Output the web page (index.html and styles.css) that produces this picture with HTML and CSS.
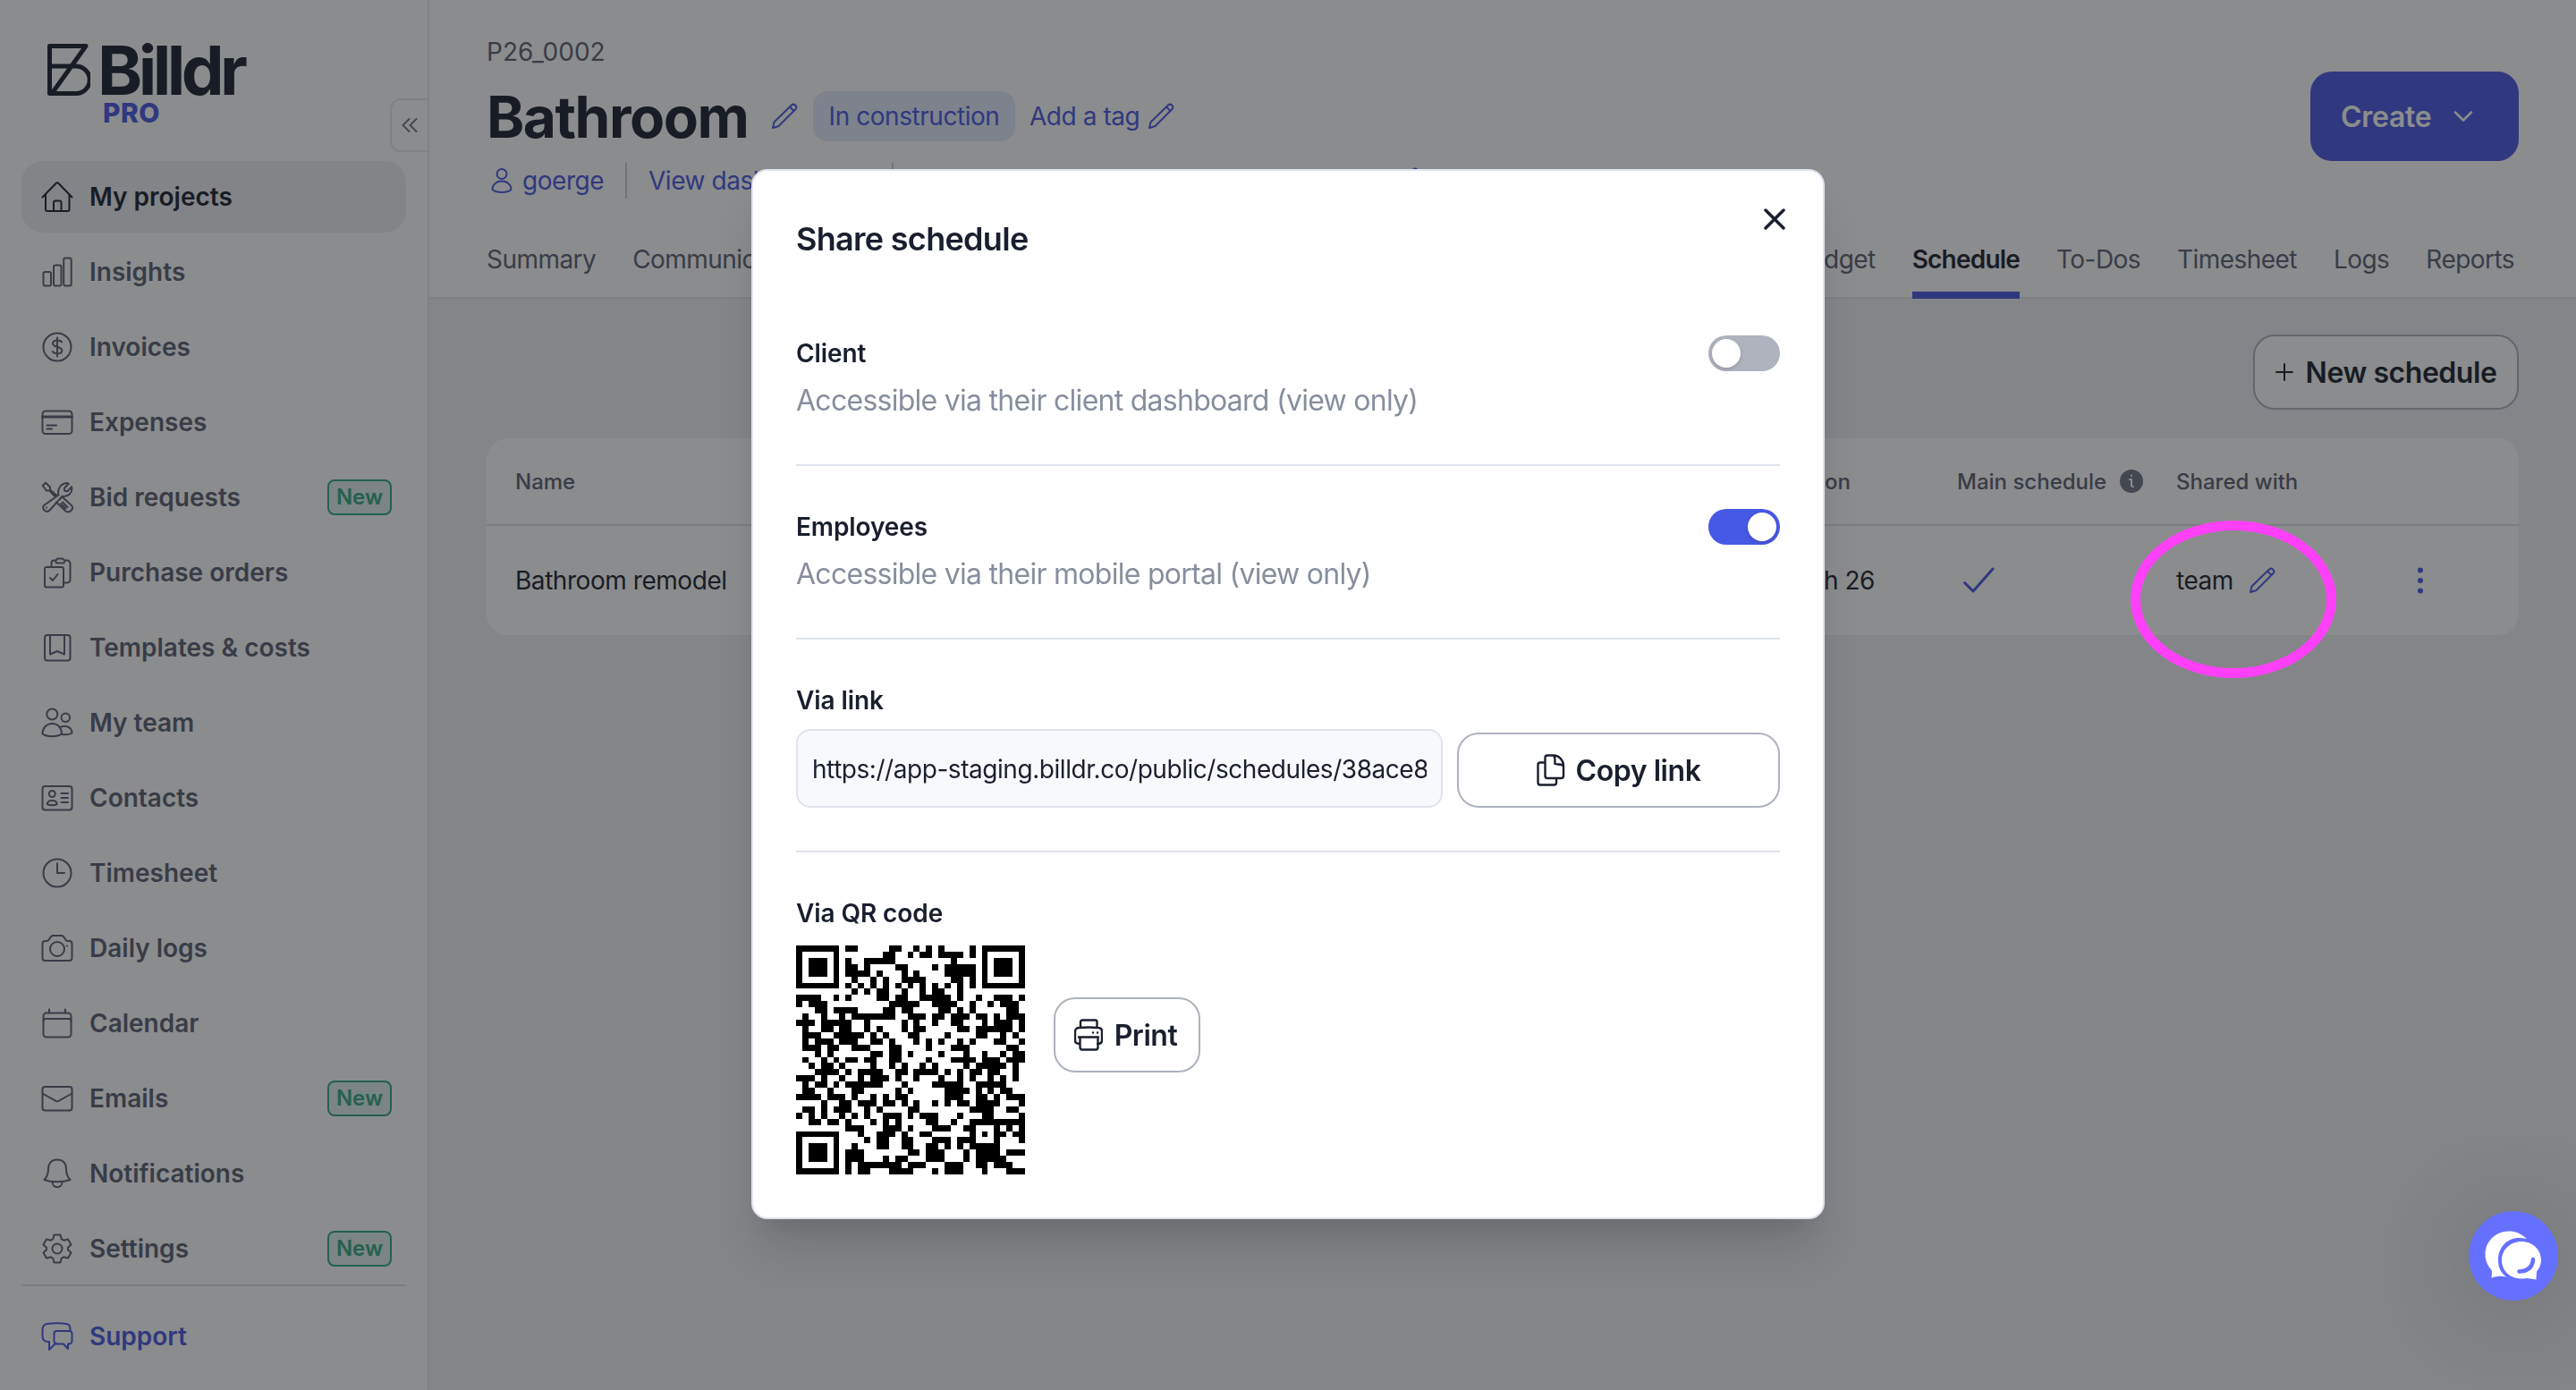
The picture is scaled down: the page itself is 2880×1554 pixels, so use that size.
FILE: index.html
```html
<!DOCTYPE html>
<html lang="en">
<head>
    <meta charset="UTF-8">
    <meta name="viewport" content="width=device-width, initial-scale=1.0">
    <title>Bathroom - Schedule</title>
    <link rel="stylesheet" href="styles.css">
</head>
<body>
    <div class="app">
        <aside class="sidebar">
            <div class="logo">
                <svg class="logo-mark" viewBox="0 0 48 58"><path d="M2.5 2.5H43L5 55.500M2.500 2.500V55.500H32a15 15 0 0 0 0-30.500H2.500" /></svg>
                <div class="logo-text">
                    <span class="logo-name">Billdr</span>
                    <span class="logo-pro">PRO</span>
                </div>
            </div>
            <button class="collapse">
                <svg viewBox="0 0 18 16"><path d="M8.500 1L1.500 8l7 7M16.500 1l-7 7 7 7" /></svg>
            </button>
            <nav class="nav">
                <a class="nav-item active">
                    <svg class="icon" viewBox="0 0 36 36"><path d="M1.500 18.500L16.500 3a2 2 0 0 1 3 0L34.500 18.500M5 15.500V32a2 2 0 0 0 2 2H29.500a2 2 0 0 0 2-2V15.500M14 34V24.500a2 2 0 0 1 2-2h4.500a2 2 0 0 1 2 2V34" /></svg>
                    <span>My projects</span>
                </a>
                <a class="nav-item">
                    <svg class="icon" viewBox="0 0 36 36"><rect x="2.500" y="18" width="8.500" height="15.500" rx="2" /><rect x="14" y="10.500" width="8.500" height="23" rx="2" /><rect x="25.200" y="2.500" width="8.500" height="31" rx="2" /></svg>
                    <span>Insights</span>
                </a>
                <a class="nav-item">
                    <svg class="icon" viewBox="0 0 36 36"><circle cx="18" cy="18" r="15.500" /><path d="M23 12.500c-1-1.500-3-2-5-2-3 0-5 1.300-5 3.600 0 5 10.300 2.800 10.300 7.600 0 2.300-2.300 3.600-5.300 3.600-2.300 0-4.300-.7-5.300-2.300M18 7.500v21" /></svg>
                    <span>Invoices</span>
                </a>
                <a class="nav-item">
                    <svg class="icon" viewBox="0 0 36 36"><rect x="1.500" y="5.500" width="33" height="25.500" rx="3.500" /><path d="M6.500 21.500h10.500M6.500 25.500h5.500" /><path class="thick" d="M1.500 12h33" /></svg>
                    <span>Expenses</span>
                </a>
                <a class="nav-item">
                    <svg class="icon" viewBox="0 0 36 36"><path d="M17 15.500L10 9.500V6.500L5 1.800 1.800 5l4 5.500h3.500l6.200 6.500M19.500 15.500c-1.500-4 .5-13 9.500-13.500l1.800.8-5 5 .5 3 3 .5 4.700-5c1.500 7-4 11.500-10.500 10.500L9.500 32.500c-3 3.500-9.500-1-6.500-5.500zM6 29.500h.1M20.500 20.500l3-3 10.500 9.500c3 4-2 9-6.500 6.500L17 23.500M24 23.500l5.500 5.500M22 25l5.500 5.500" /></svg>
                    <span>Bid requests</span>
                    <em class="badge">New</em>
                </a>
                <a class="nav-item">
                    <svg class="icon" viewBox="0 0 36 36"><rect x="4" y="12" width="21" height="22.500" rx="2" /><path d="M11.500 12V7.500a3 3 0 0 1 3-3h2M26.500 4.500H29a3.500 3.500 0 0 1 3.500 3.500v18a3.500 3.500 0 0 1-3.500 3.500h-4M10 24l3 3 5.500-7M18.500 2.500h5.500l2.500 2.500-1 2.500h-8.500l-1-2.500z" /></svg>
                    <span>Purchase orders</span>
                </a>
                <a class="nav-item">
                    <svg class="icon" viewBox="0 0 36 36"><rect x="4" y="4" width="28.500" height="28.500" rx="3" /><path d="M10 4v21.500l8-3.500 8 3.500V4" /></svg>
                    <span>Templates &amp; costs</span>
                </a>
                <a class="nav-item">
                    <svg class="icon" viewBox="0 0 36 36"><circle cx="12.300" cy="8.500" r="6" /><circle cx="27.300" cy="12.300" r="4.800" /><path d="M1.500 30.500c0-6 4-11.500 11-11.500s10.500 5.500 10.500 11.500c-4.500 3.500-17 3.500-21.500 0zM20.500 23.500c5-3.500 13.500-2 14 6-2.500 1.500-7 2-11.500 1.500" /></svg>
                    <span>My team</span>
                </a>
                <a class="nav-item">
                    <svg class="icon" viewBox="0 0 36 36"><rect x="1.500" y="5" width="33" height="26.500" rx="3" /><circle cx="12.300" cy="13.500" r="3.500" /><path d="M6.800 25c0-5.500 11-5.500 11 0-3 1.500-8 1.500-11 0zM22.500 13h7.500M22.500 18h7.500M22.500 23h7.500" /></svg>
                    <span>Contacts</span>
                </a>
                <a class="nav-item">
                    <svg class="icon" viewBox="0 0 36 36"><circle cx="18" cy="18" r="15.500" /><path d="M18 7v11h8" /></svg>
                    <span>Timesheet</span>
                </a>
                <a class="nav-item">
                    <svg class="icon" viewBox="0 0 36 36"><path d="M4.500 32h27a3 3 0 0 0 3-3V13a3 3 0 0 0-3-3h-2.500c-2 0-3-6-6-6H13c-3 0-4 6-6 6H4.500a3 3 0 0 0-3 3v16a3 3 0 0 0 3 3zM29 15.500h.1" /><circle cx="18" cy="19" r="8" /></svg>
                    <span>Daily logs</span>
                </a>
                <a class="nav-item">
                    <svg class="icon" viewBox="0 0 36 36"><rect x="2.500" y="6.500" width="31" height="27" rx="3.500" /><path d="M2.500 15.500c0-1.500 1-2.500 2.500-2.500h26c1.500 0 2.500 1 2.500 2.500M9 2.500v4M27 2.500v4" /></svg>
                    <span>Calendar</span>
                </a>
                <a class="nav-item">
                    <svg class="icon" viewBox="0 0 36 36"><rect x="1.500" y="5" width="33" height="26.500" rx="3" /><path d="M1.500 12.500L17 21.200q1 .5 2 0L34.500 12.500" /></svg>
                    <span>Emails</span>
                    <em class="badge">New</em>
                </a>
                <a class="nav-item">
                    <svg class="icon" viewBox="0 0 36 36"><path d="M18 2.500c-6.500 0-10 4.500-10 10.500 0 6.500-2 9.500-4.500 12 8 3 21 3 29 0-2.500-2.500-4.500-5.500-4.500-12 0-6-3.500-10.500-10-10.500zM12.500 27.500c0 7.500 11 7.500 11 0" /></svg>
                    <span>Notifications</span>
                </a>
                <a class="nav-item">
                    <svg class="icon" viewBox="0 0 36 36"><path d="M14.500 2.500h7l1.200 4.700 2.600 1.500 4.700-1.300 3.500 6.100-3.500 3.300v2.400l3.500 3.300-3.500 6.100-4.700-1.300-2.600 1.500-1.200 4.700h-7l-1.200-4.700-2.600-1.500L6 28.600l-3.500-6.100L6 19.200v-2.400l-3.500-3.300L6 7.400l4.700 1.300 2.600-1.500z" /><circle cx="18" cy="18" r="5.500" /></svg>
                    <span>Settings</span>
                    <em class="badge">New</em>
                </a>
            </nav>
            <a class="nav-item support">
                <svg class="icon" viewBox="0 0 36 36"><path d="M32.500 11.500V9.500c0-3-1.500-5-4.500-5.500-6-.9-14-.9-21 0-4 .5-5.500 3-5.500 7v6.500c0 4 2 6.500 6.500 6.500h1v9l7.500-7.500M17.500 12h14a3 3 0 0 1 3 3v8a3.500 3.500 0 0 1-3.500 3.500H30V32l-5-5.500h-7.500a3 3 0 0 1-3-3V15a3 3 0 0 1 3-3z" /></svg>
                <span>Support</span>
            </a>
        </aside>

        <main class="main">
            <header class="header">
                <div class="header-top">
                    <div class="project">
                        <div class="project-code">P26_0002</div>
                        <div class="project-title">
                            <h1>Bathroom</h1>
                            <svg class="pencil" viewBox="0 0 30 30"><path d="M2 28l1.500-6.500L23 2.500c3-2.500 7 1.500 4.500 4.500L8.500 26zM21 4.500l4.500 4.500" /></svg>
                            <span class="status">In construction</span>
                            <span class="add-tag">Add a tag</span>
                            <svg class="pencil" viewBox="0 0 30 30"><path d="M2 28l1.500-6.500L23 2.500c3-2.500 7 1.500 4.500 4.500L8.500 26zM21 4.500l4.500 4.500" /></svg>
                        </div>
                        <div class="project-links">
                            <span class="link-item">
                                <svg class="user" viewBox="0 0 24 30"><circle cx="12" cy="7.500" r="5.500" /><path d="M1.500 25c0-5 4-9.500 10.500-9.500S22.500 20 22.500 25c-5 4-16 4-21 0z" /></svg>
                                goerge
                            </span>
                            <span class="link-item">View dashboard</span>
                            <span class="link-item">
                                <svg class="pencil" viewBox="0 0 30 30"><path d="M2 28l1.500-6.500L23 2.500c3-2.500 7 1.500 4.500 4.500L8.500 26zM21 4.500l4.500 4.500" /></svg>
                            </span>
                        </div>
                    </div>
                    <button class="create">
                        Create
                        <svg viewBox="0 0 22 14"><path d="M2 2.500l9 9 9-9" /></svg>
                    </button>
                </div>
                <nav class="tabs">
                    <a>Summary</a>
                    <a>Communication</a>
                    <a class="push">Budget</a>
                    <a class="current">Schedule</a>
                    <a>To-Dos</a>
                    <a>Timesheet</a>
                    <a>Logs</a>
                    <a>Reports</a>
                </nav>
            </header>

            <section class="content">
                <div class="toolbar">
                    <button class="outline">
                        <svg class="plus" viewBox="0 0 20 20"><path d="M10 1v18M1 10h18" /></svg>
                        New schedule
                    </button>
                </div>
                <div class="table">
                    <div class="row head">
                        <span>Name</span>
                        <span class="right">Duration</span>
                        <span class="with-icon">
                            Main schedule
                            <svg class="info" viewBox="0 0 26 26"><circle cx="13" cy="13" r="13" /><path d="M11 11h2v6.500q0 1.500 2 1.500" /><path d="M13 6.500v.4" /></svg>
                        </span>
                        <span>Shared with</span>
                        <span></span>
                    </div>
                    <div class="row">
                        <span>Bathroom remodel</span>
                        <span class="right date">March 26</span>
                        <span><svg class="check" viewBox="0 0 36 30"><path d="M2.500 17.500l9.500 9.500L34 2" /></svg></span>
                        <span class="with-icon">
                            team
                            <svg class="pencil" viewBox="0 0 30 30"><path d="M2 28l1.500-6.500L23 2.500c3-2.500 7 1.500 4.500 4.500L8.500 26zM21 4.500l4.500 4.500" /></svg>
                        </span>
                        <span><svg class="kebab" viewBox="0 0 6 30"><circle cx="3" cy="3.500" r="3" /><circle cx="3" cy="15" r="3" /><circle cx="3" cy="26.500" r="3" /></svg></span>
                    </div>
                </div>
            </section>
        </main>
    </div>

    <div class="overlay">
        <div class="modal">
            <div class="modal-header">
                <h2>Share schedule</h2>
                <button class="close"><svg viewBox="0 0 24 24"><path d="M2 2l20 20M22 2L2 22" /></svg></button>
            </div>
            <div class="share">
                <div class="share-row">
                    <h3>Client</h3>
                    <span class="toggle"></span>
                </div>
                <p>Accessible via their client dashboard (view only)</p>
            </div>
            <div class="share">
                <div class="share-row">
                    <h3>Employees</h3>
                    <span class="toggle on"></span>
                </div>
                <p>Accessible via their mobile portal (view only)</p>
            </div>
            <div class="share via-link">
                <h3>Via link</h3>
                <div class="link-row">
                    <div class="link-field"><span id="share-link">https://app-staging.billdr.co/public/schedules/38ace8d1-5a7e-4c02-9b6f-e41d7a3058c9</span></div>
                    <button class="outline copy">
                        <svg class="copy-icon" viewBox="0 0 32 36"><path d="M9.500 4a2.500 2.500 0 0 1 2.500-2.500H19c6 0 11 5.500 11 12V24.500a2.500 2.500 0 0 1-2.500 2.500H12a2.500 2.500 0 0 1-2.500-2.500zM18.500 1.500c3 1.500 1.500 7 2 9.500 2.500 1 7.500-.5 9.500 2.500M9.500 9.500H4a2.500 2.500 0 0 0-2.500 2.500V32a2.500 2.500 0 0 0 2.500 2.500h15.500a2.500 2.500 0 0 0 2.500-2.500V27" /></svg>
                        Copy link
                    </button>
                </div>
            </div>
            <div class="share via-qr">
                <h3>Via QR code</h3>
                <div class="qr-row">
                    <svg class="qr" viewBox="0 0 37 37" shape-rendering="crispEdges"><path id="qr-path" d="" /></svg>
                    <button class="outline print">
                        <svg class="print-icon" viewBox="0 0 32 36"><path d="M7 10V3.500a2 2 0 0 1 2-2H23.500a2 2 0 0 1 2 2V10M6 28c-3 0-5-1-5-4V14.500c0-3 2-4.500 4.500-4.500q10.500-1 21 0c3 0 4.500 2 4.500 4.500V24c0 3-2 4-5 4M5 20.500h22M6.500 20.500V32a2.500 2.500 0 0 0 2.500 2.500H24a2.500 2.500 0 0 0 2.500-2.500V20.500M21 15.500h.1M26 15.500h.1" /></svg>
                        Print
                    </button>
                </div>
            </div>
        </div>
    </div>

    <svg class="highlight" viewBox="0 0 230 176"><ellipse cx="115" cy="88" rx="109.500" ry="82.500" /></svg>
    <button class="chat">
        <svg viewBox="0 0 64 56">
            <path class="bubble" d="M47 9C41 3 34 .5 27 .5 12 .5.500 12 .5 26.500c0 7 3 13 7.500 18l-.5 8q8-3 16.500-1C17 46 15 40 15 32 15 18 26 7.500 39 8q4 0 8 1z" />
            <path class="bubble" d="M41 12C28.500 12 19 21 19 33s9.500 20.500 22 20.500q3 0 6-.5l10.500 1.500.5-9c3.500-4 5-8 5-12.500C63 21 53.500 12 41 12z" />
            <path class="smile" d="M38.500 45.500Q53 45 54 32" />
        </svg>
    </button>
    <script src="script.js"></script>
</body>
</html>
```
FILE: styles.css
```css
* {
    box-sizing: border-box;
}

body {
    font-family: Inter, "Liberation Sans", sans-serif;
    font-size: 28px;
    letter-spacing: -0.45px;
    margin: 0;
    color: #191f2e;
    overflow: hidden;
}

h1, h2, h3, p {
    margin: 0;
}

button {
    font-family: inherit;
    border: none;
    padding: 0;
}

svg {
    display: block;
    flex: none;
    fill: none;
    stroke: currentColor;
    stroke-width: 2;
    stroke-linecap: round;
    stroke-linejoin: round;
}

.app {
    display: flex;
    height: 1554px;
}

/* Sidebar */
.sidebar {
    position: relative;
    width: 480px;
    flex: none;
    padding: 48px 24px 0;
    border-right: 2px solid #e8e9ec;
    background: #fff;
    letter-spacing: 0;
}

.logo {
    display: flex;
    gap: 12px;
    height: 132px;
    padding-left: 29px;
}

.logo-mark {
    width: 48px;
    height: 58px;
    margin-top: 1px;
    stroke-width: 5;
}

.logo-text {
    display: flex;
    flex-direction: column;
}

.logo-name {
    font-size: 76px;
    font-weight: 700;
    line-height: 60px;
    letter-spacing: -4.6px;
    margin-left: -4px;
}

.logo-pro {
    font-size: 30px;
    font-weight: 800;
    line-height: 36px;
    letter-spacing: 0.4px;
    margin-left: 2px;
    color: #4857e3;
}

.collapse {
    position: absolute;
    top: 110px;
    right: 0;
    width: 42px;
    height: 60px;
    display: flex;
    align-items: center;
    justify-content: center;
    border: 2px solid #e8e9ec;
    border-right: none;
    border-radius: 12px 0 0 12px;
    background: #fff;
    color: #6f7585;
}

.collapse svg {
    width: 18px;
    height: 16px;
}

.nav {
    display: flex;
    flex-direction: column;
    gap: 4px;
    border-bottom: 2px solid #dfe0ee;
    margin-bottom: 16px;
}

.nav-item {
    display: flex;
    align-items: center;
    gap: 18px;
    height: 80px;
    padding: 0 16px 0 22px;
    border-radius: 24px;
    font-weight: 600;
    color: #595f72;
}

.nav-item.active {
    background: #eeeef3;
    color: #191f2e;
}

.nav-item.support {
    color: #4857e3;
}

.icon {
    width: 36px;
    height: 36px;
}

.icon .thick {
    stroke-width: 3;
}

.badge {
    margin-left: auto;
    width: 72px;
    height: 40px;
    border: 2px solid #33a780;
    border-radius: 8px;
    background: #ddf1ec;
    color: #33a780;
    font-size: 24px;
    font-style: normal;
    line-height: 36px;
    text-align: center;
}

/* Project header */
.main {
    flex: 1;
    background: #f0f1f6;
}

.header {
    height: 334px;
    padding: 0 64px;
    border-bottom: 2px solid #e6e7eb;
    background: #fff;
}

.header-top {
    display: flex;
    justify-content: space-between;
    height: 246px;
}

.project-code {
    margin-top: 40px;
    line-height: 36px;
    letter-spacing: 0;
    color: #595f72;
}

.project-title {
    display: flex;
    align-items: center;
    height: 80px;
    margin-top: 14px;
    color: #4857e3;
}

.project-title h1 {
    font-size: 64px;
    font-weight: 700;
    letter-spacing: -1.5px;
    color: #191f2e;
    width: 318px;
}

.pencil {
    width: 30px;
    height: 30px;
    color: #4857e3;
}

.status {
    width: 226px;
    height: 56px;
    margin: 0 16px 0 17px;
    border-radius: 16px;
    background: #e3eafd;
    line-height: 56px;
    text-align: center;
}

.add-tag {
    width: 132px;
    white-space: nowrap;
}

.project-links {
    display: flex;
    margin-top: 12px;
    color: #4857e3;
}

.link-item {
    display: flex;
    align-items: center;
    gap: 11px;
    height: 40px;
    padding: 0 24px;
    border-right: 2px solid #c7cbd6;
    white-space: nowrap;
}

.link-item:first-child {
    width: 157px;
    padding: 0 0 0 5px;
}

.link-item:nth-child(2) {
    width: 298px;
}

.link-item:last-child {
    width: 588px;
    padding-right: 0;
    justify-content: flex-end;
    border: none;
}

.user {
    width: 24px;
    height: 30px;
}

.create {
    display: flex;
    align-items: center;
    gap: 25px;
    width: 233px;
    height: 100px;
    margin-top: 80px;
    padding-left: 34px;
    border-radius: 24px;
    background: #4857e3;
    color: #fff;
    font-size: 32px;
    font-weight: 600;
    letter-spacing: -0.3px;
}

.create svg {
    width: 22px;
    height: 14px;
    stroke-width: 2.5;
}

.tabs {
    display: flex;
    gap: 41px;
    height: 88px;
    padding-right: 5px;
    line-height: 88px;
    letter-spacing: -0.55px;
    color: #595f72;
}

.tabs .push {
    margin-left: auto;
}

.tabs .current {
    border-bottom: 8px solid #4857e3;
    color: #191f2e;
    font-weight: 600;
    letter-spacing: -0.8px;
}

/* Schedules table */
.content {
    padding: 40px 64px;
}

.toolbar {
    display: flex;
    justify-content: flex-end;
    margin-bottom: 32px;
}

.outline {
    display: flex;
    align-items: center;
    justify-content: center;
    height: 84px;
    border: 2px solid #adb2bf;
    border-radius: 24px;
    background: #fff;
    color: #191f2e;
    font-size: 32px;
    font-weight: 600;
    letter-spacing: -0.45px;
    white-space: nowrap;
}

.toolbar .outline {
    width: 297px;
    gap: 14px;
}

.plus {
    width: 20px;
    height: 20px;
}

.table {
    height: 220px;
    border-radius: 24px;
    background: #fff;
}

.row {
    display: grid;
    grid-template-columns: 1000px 612px 245px 269px 1fr;
    align-items: center;
    height: 122px;
    padding: 0 32px;
}

.row.head {
    height: 98px;
    border-bottom: 2px solid #dfe0ea;
    font-size: 24px;
    font-weight: 500;
    letter-spacing: 0;
    color: #595f72;
}

.right {
    text-align: right;
    padding-right: 119px;
}

.right.date {
    padding-right: 92px;
}

.with-icon {
    display: flex;
    align-items: center;
    gap: 17px;
    white-space: nowrap;
}

.head .with-icon {
    gap: 15px;
}

.info {
    width: 26px;
    height: 26px;
    color: #fff;
}

.info circle {
    fill: #6f7585;
    stroke: none;
}

.check {
    width: 36px;
    height: 30px;
    margin-left: 6px;
    color: #4857e3;
    stroke-width: 3;
}

.kebab {
    width: 6px;
    height: 30px;
    margin-left: 1px;
    color: #4857e3;
    fill: currentColor;
    stroke: none;
}

/* Share modal */
.overlay {
    position: fixed;
    inset: 0;
    display: flex;
    justify-content: center;
    align-items: flex-start;
    padding-top: 189px;
    background: rgba(23, 25, 28, 0.5);
}

.modal {
    width: 1200px;
    height: 1174px;
    padding: 0 48px;
    border: 2px solid #dfe3ee;
    border-radius: 18px;
    background: #fff;
    box-shadow: 0 40px 50px -10px rgba(0, 0, 0, 0.14), 0 20px 20px -10px rgba(0, 0, 0, 0.06);
}

.modal-header {
    display: flex;
    justify-content: space-between;
    height: 136px;
}

.modal-header h2 {
    margin-top: 52px;
    font-size: 36px;
    font-weight: 600;
    line-height: 48px;
    letter-spacing: -0.7px;
}

.close {
    width: 24px;
    height: 24px;
    margin: 42px -6px 0 0;
    background: none;
    color: #191f2e;
}

.close svg {
    stroke-width: 3.5;
}

.share {
    padding: 48px 0 47px;
    border-bottom: 2px solid #dfe3ec;
}

.share-row {
    display: flex;
    justify-content: space-between;
}

.share h3 {
    font-size: 28px;
    font-weight: 600;
    line-height: 40px;
    letter-spacing: -0.1px;
}

.share p {
    margin-top: 9px;
    font-size: 32px;
    line-height: 48px;
    letter-spacing: -0.73px;
    color: #868e9e;
}

.toggle {
    width: 80px;
    height: 40px;
    padding: 4px;
    border-radius: 20px;
    background: #aeb3bd;
}

.toggle::after {
    content: "";
    display: block;
    width: 32px;
    height: 32px;
    border-radius: 50%;
    background: #fff;
    box-shadow: 0 2px 4px rgba(0, 0, 0, 0.15);
}

.toggle.on {
    background: #4759e4;
}

.toggle.on::after {
    margin-left: auto;
}

.via-link {
    padding-bottom: 48px;
}

.link-row {
    display: flex;
    align-items: flex-end;
    gap: 16px;
    margin-top: 12px;
}

.link-field {
    width: 723px;
    height: 88px;
    padding: 0 16px;
    border: 2px solid #dfe3ec;
    border-radius: 16px;
    background: #f8f9fd;
    line-height: 86px;
}

.link-field span {
    display: block;
    overflow: hidden;
    white-space: nowrap;
}

.copy {
    flex: 1;
    gap: 12px;
}

.copy-icon,
.print-icon {
    width: 32px;
    height: 36px;
    stroke-width: 2.4;
}

.via-qr {
    padding-bottom: 0;
    border: none;
}

.qr-row {
    display: flex;
    align-items: center;
    gap: 32px;
    margin-top: 16px;
}

.qr {
    width: 256px;
    height: 256px;
    fill: #000;
    stroke: none;
}

.print {
    width: 164px;
    margin-top: -56px;
    padding-right: 3px;
    gap: 13px;
}

/* Items floating over the page */
.highlight {
    position: absolute;
    left: 2382px;
    top: 582px;
    width: 230px;
    height: 176px;
    color: #ff40f8;
    stroke-width: 11;
}

.chat {
    position: fixed;
    right: 20px;
    bottom: 100px;
    width: 100px;
    height: 100px;
    border-radius: 50%;
    background: #6670ff;
    box-shadow: 0 8px 100px rgba(60, 60, 40, 0.3);
}

.chat svg {
    width: 64px;
    height: 56px;
    margin: 0 auto;
    stroke: none;
}

.bubble {
    fill: #fff;
}

.smile {
    stroke: #6670ff;
    stroke-width: 4.5;
}
```
FILE: script.js
```js
// Draws the share link as a version 5-L QR code (37 modules, 108 data + 26 error codewords)
const SIZE = 37;
const DATA_LEN = 108;
const ECC_LEN = 26;
const FORMAT = '111100010011101';

function gfMultiply(a, b) {
    let result = 0;
    for (let i = 7; i >= 0; i--) {
        result = (result << 1) ^ ((result >>> 7) * 0x11d);
        result ^= ((b >>> i) & 1) * a;
    }
    return result;
}

function errorCodewords(data) {
    const divisor = new Array(ECC_LEN).fill(0);
    divisor[ECC_LEN - 1] = 1;
    let root = 1;
    for (let i = 0; i < ECC_LEN; i++) {
        for (let j = 0; j < ECC_LEN; j++) {
            divisor[j] = gfMultiply(divisor[j], root);
            if (j + 1 < ECC_LEN) divisor[j] ^= divisor[j + 1];
        }
        root = gfMultiply(root, 2);
    }
    const result = new Array(ECC_LEN).fill(0);
    for (const value of data) {
        const factor = value ^ result.shift();
        result.push(0);
        divisor.forEach((coef, i) => result[i] ^= gfMultiply(coef, factor));
    }
    return result;
}

function encode(text) {
    const toBits = (n) => n.toString(2).padStart(8, '0');
    let bits = '0100' + toBits(text.length);
    for (const ch of text) bits += toBits(ch.charCodeAt(0));
    bits += '0000';
    const data = bits.match(/.{8}/g).map((b) => parseInt(b, 2));
    for (let pad = 0xec; data.length < DATA_LEN; pad ^= 0xec ^ 0x11) data.push(pad);
    return data.concat(errorCodewords(data)).map(toBits).join('');
}

function buildMatrix(text) {
    const m = Array.from({ length: SIZE }, () => new Array(SIZE).fill(null));
    const set = (r, c, on) => {
        if (r >= 0 && c >= 0 && r < SIZE && c < SIZE) m[r][c] = on ? 1 : 0;
    };

    for (let i = 0; i < SIZE; i++) {
        set(6, i, i % 2 === 0);
        set(i, 6, i % 2 === 0);
    }
    for (const [r, c] of [[3, 3], [3, SIZE - 4], [SIZE - 4, 3]]) {
        for (let y = -4; y <= 4; y++) {
            for (let x = -4; x <= 4; x++) {
                const d = Math.max(Math.abs(x), Math.abs(y));
                set(r + y, c + x, d !== 2 && d !== 4);
            }
        }
    }
    for (let y = -2; y <= 2; y++) {
        for (let x = -2; x <= 2; x++) {
            set(30 + y, 30 + x, Math.max(Math.abs(x), Math.abs(y)) !== 1);
        }
    }

    const first = [[8, 0], [8, 1], [8, 2], [8, 3], [8, 4], [8, 5], [8, 7], [8, 8], [7, 8], [5, 8], [4, 8], [3, 8], [2, 8], [1, 8], [0, 8]];
    first.forEach(([r, c], i) => {
        set(r, c, FORMAT[i] === '1');
        if (i < 7) set(SIZE - 1 - i, 8, FORMAT[i] === '1');
        else set(8, SIZE - 15 + i, FORMAT[i] === '1');
    });
    set(SIZE - 8, 8, true);

    const bits = encode(text);
    let index = 0;
    let up = true;
    for (let right = SIZE - 1; right > 0; right -= 2) {
        if (right === 6) right = 5;
        for (let i = 0; i < SIZE; i++) {
            const row = up ? SIZE - 1 - i : i;
            for (const col of [right, right - 1]) {
                if (m[row][col] !== null) continue;
                const bit = Number(bits[index++] || 0);
                m[row][col] = bit ^ ((row + col) % 3 === 0 ? 1 : 0);
            }
        }
        up = !up;
    }
    return m;
}

const matrix = buildMatrix(document.getElementById('share-link').textContent);
let path = '';
matrix.forEach((row, y) => row.forEach((on, x) => {
    if (on) path += `M${x} ${y}h1v1h-1z`;
}));
document.getElementById('qr-path').setAttribute('d', path);
```
